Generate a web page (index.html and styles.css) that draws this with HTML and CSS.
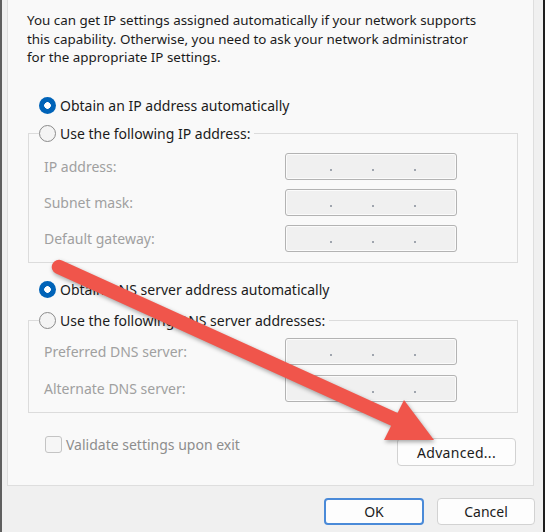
FILE: index.html
```html
<!DOCTYPE html>
<html>
<head>
<meta charset="utf-8">
<link rel="stylesheet" href="styles.css">
</head>
<body>
<div class="window">
  <div class="panel">
    <p class="intro">You can get IP settings assigned automatically if your network supports<br>this capability. Otherwise, you need to ask your network administrator<br>for the appropriate IP settings.</p>

    <div class="radio-row r1"><span class="radio checked"></span><span>Obtain an IP address automatically</span></div>

    <fieldset class="group g1">
      <legend><span class="radio"></span><span>Use the following IP address:</span></legend>
      <div class="fields">
        <span class="label">IP address:</span><span class="ipbox"><i></i><i></i><i></i></span>
        <span class="label">Subnet mask:</span><span class="ipbox"><i></i><i></i><i></i></span>
        <span class="label">Default gateway:</span><span class="ipbox"><i></i><i></i><i></i></span>
      </div>
    </fieldset>

    <div class="radio-row r3"><span class="radio checked"></span><span>Obtain DNS server address automatically</span></div>

    <fieldset class="group g2">
      <legend><span class="radio"></span><span>Use the following DNS server addresses:</span></legend>
      <div class="fields">
        <span class="label">Preferred DNS server:</span><span class="ipbox"><i></i><i></i><i></i></span>
        <span class="label">Alternate DNS server:</span><span class="ipbox"><i></i><i></i><i></i></span>
      </div>
    </fieldset>

    <div class="bottom-row">
      <div class="check-row"><span class="check"></span><span>Validate settings upon exit</span></div>
      <button class="btn advanced">Advanced...</button>
    </div>
  </div>
  <div class="buttons">
    <button class="btn ok">OK</button>
    <button class="btn cancel">Cancel</button>
  </div>
</div>
<svg class="arrow" width="545" height="532" viewBox="0 0 545 532">
  <line x1="59" y1="267" x2="398" y2="421" stroke="#f0554b" stroke-width="14.5" stroke-linecap="round"/>
  <polygon points="404,400 384,440 434,440" fill="#f0554b"/>
</svg>
</body>
</html>
```

FILE: styles.css
```css
html, body {
  margin: 0;
  padding: 0;
}
body {
  width: 545px;
  height: 532px;
  overflow: hidden;
  position: relative;
  background: #f0f0f0;
  font-family: "Noto Sans", "Open Sans", sans-serif;
  font-size: 14px;
  color: #1b1b1b;
}
.window {
  height: 532px;
  box-sizing: border-box;
  border-left: 2px solid #5f5f5f;
  border-right: 2px solid #1e1e1e;
  padding: 0 9px 0 5px;
  display: flex;
  flex-direction: column;
}
.panel {
  height: 486px;
  flex: none;
  box-sizing: border-box;
  background: #f9f9f9;
  border: 1px solid #dedede;
  border-top: none;
  padding: 11px 0 0 20px;
}
.intro {
  margin: 0 0 0 -1px;
  font-size: 13.4px;
  line-height: 18.5px;
}
.radio-row, .group legend {
  display: flex;
  align-items: center;
  gap: 4px;
  height: 20px;
}
.radio-row {
  margin-left: 11px;
}
.r1 { margin-top: 28.5px; }
.r3 { margin-top: 16px; }
.radio {
  width: 17px;
  height: 17px;
  box-sizing: border-box;
  border-radius: 50%;
  border: 1px solid #8b8b8b;
  background: #f4f4f4;
  flex: none;
}
.radio.checked {
  border: none;
  background: radial-gradient(circle, #ffffff 0 3px, #0063b8 3.6px);
}
.group {
  width: 490px;
  box-sizing: border-box;
  border: 1px solid #dcdcdc;
  margin: 8px 0 0 0;
  padding: 10px 0 10px 10px;
  min-inline-size: auto;
}
.g2 {
  margin-top: 11px;
  padding-top: 8px;
}
.group legend {
  padding: 0 4px 0 0;
}
.fields {
  display: grid;
  grid-template-columns: 241px 172px;
  row-gap: 9px;
  align-items: center;
  margin-left: 5px;
}
.g2 .fields { row-gap: 10px; }
.label {
  color: #a0a0a0;
}
.ipbox {
  height: 27px;
  box-sizing: border-box;
  border: 1px solid #b3b3b3;
  border-radius: 3px;
  background: #f0f0f0;
  box-shadow: inset 0 0 0 1px #fbfbfb;
  display: flex;
  align-items: flex-start;
  gap: 40px;
  padding: 15px 0 0 44px;
}
.ipbox i {
  width: 2px;
  height: 2px;
  background: #858c98;
  border-radius: 1px;
}
.bottom-row {
  width: 490px;
  margin-top: 23px;
  display: flex;
  justify-content: space-between;
  align-items: flex-start;
}
.check-row {
  display: flex;
  align-items: center;
  gap: 4px;
  height: 17px;
  margin-left: 17px;
  color: #8d8d8d;
}
.check {
  width: 17px;
  height: 17px;
  box-sizing: border-box;
  border: 1px solid #c4c4c4;
  border-radius: 3px;
  background: #f6f6f6;
}
.btn {
  font-family: inherit;
  font-size: 14px;
  color: #1b1b1b;
  background: #fdfdfd;
  border: 1px solid #d2d2d2;
  border-radius: 4px;
  padding: 0;
  box-sizing: border-box;
}
.advanced {
  width: 119px;
  height: 28px;
  margin: 2px 2px 0 0;
  letter-spacing: 0.3px;
}
.buttons {
  display: flex;
  justify-content: flex-end;
  gap: 13px;
  padding-top: 12px;
  margin-right: -1px;
}
.ok {
  width: 100px;
  height: 27px;
  border: 2px solid #4a8ad8;
}
.cancel {
  width: 98px;
  height: 27px;
}
.arrow {
  position: absolute;
  left: 0;
  top: 0;
  pointer-events: none;
  filter: drop-shadow(1px 2px 2px rgba(0, 0, 0, 0.35));
}
```
